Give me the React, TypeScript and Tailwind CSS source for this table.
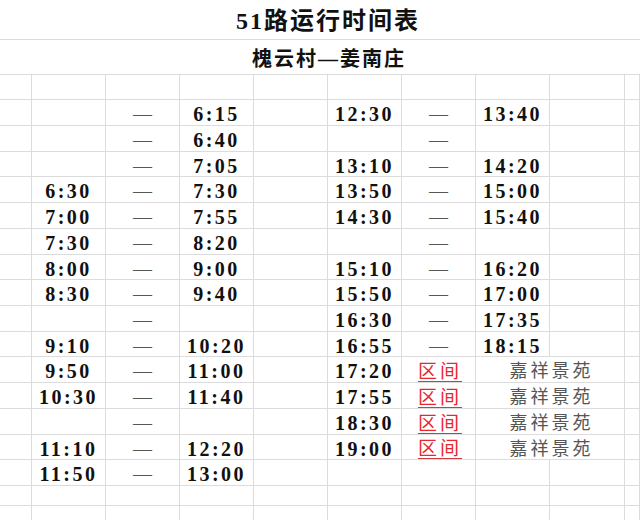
import React from 'react';

type Row = {
  a: string;
  b: string;
  c: string;
  d: string;
  kind: 'dash' | 'seg' | '';
  f: string;
};

const rows: Row[] = [
  { a: '', b: '—', c: '6:15', d: '12:30', kind: 'dash', f: '13:40' },
  { a: '', b: '—', c: '6:40', d: '', kind: 'dash', f: '' },
  { a: '', b: '—', c: '7:05', d: '13:10', kind: 'dash', f: '14:20' },
  { a: '6:30', b: '—', c: '7:30', d: '13:50', kind: 'dash', f: '15:00' },
  { a: '7:00', b: '—', c: '7:55', d: '14:30', kind: 'dash', f: '15:40' },
  { a: '7:30', b: '—', c: '8:20', d: '', kind: 'dash', f: '' },
  { a: '8:00', b: '—', c: '9:00', d: '15:10', kind: 'dash', f: '16:20' },
  { a: '8:30', b: '—', c: '9:40', d: '15:50', kind: 'dash', f: '17:00' },
  { a: '', b: '—', c: '', d: '16:30', kind: 'dash', f: '17:35' },
  { a: '9:10', b: '—', c: '10:20', d: '16:55', kind: 'dash', f: '18:15' },
  { a: '9:50', b: '—', c: '11:00', d: '17:20', kind: 'seg', f: '嘉祥景苑' },
  { a: '10:30', b: '—', c: '11:40', d: '17:55', kind: 'seg', f: '嘉祥景苑' },
  { a: '', b: '—', c: '', d: '18:30', kind: 'seg', f: '嘉祥景苑' },
  { a: '11:10', b: '—', c: '12:20', d: '19:00', kind: 'seg', f: '嘉祥景苑' },
  { a: '11:50', b: '—', c: '13:00', d: '', kind: '', f: '' },
];

// row heights so the lines land on the sheet's pixel rows
const heights = [
  'h-[26px]', 'h-[26px]', 'h-[25px]', 'h-[26px]', 'h-[26px]',
  'h-[26px]', 'h-[25px]', 'h-[26px]', 'h-[26px]', 'h-[25px]',
  'h-[26px]', 'h-[26px]', 'h-[26px]', 'h-[25px]', 'h-[26px]',
];

const grid = 'grid grid-cols-[32px_74px_74px_74px_74px_74px_74px_74px_75px_1fr]';
const cell = 'border-r border-b border-[#dcdcdc] flex items-center justify-center';

const Time = ({ t }: { t: string }) => (
  <span className="pt-[3px] text-[20px] font-bold tracking-[2.5px] text-[#111] leading-none">{t}</span>
);

const Dash = () => (
  <span className="pt-[2px] text-[19px] text-[#555] leading-none">—</span>
);

const Blank = ({ h }: { h: string }) => (
  <div className={`${grid} ${h}`}>
    {Array.from({ length: 10 }).map((_, i) => (
      <div key={i} className={cell} />
    ))}
  </div>
);

export default function App() {
  return (
    <div className="w-[640px] h-[520px] overflow-hidden bg-white font-['Liberation_Serif','Noto_Sans_CJK_SC',serif]">
      <div className="h-[40px] pl-[16px] border-b border-[#dcdcdc] flex items-center justify-center">
        <span className="pt-[3px] text-[24px] font-bold tracking-[2px] text-[#111] leading-none">51路运行时间表</span>
      </div>
      <div className="h-[35px] pl-[18px] border-b border-[#dcdcdc] flex items-center justify-center">
        <span className="pt-[3px] text-[20px] font-bold tracking-[2px] text-[#111] leading-none">槐云村—姜南庄</span>
      </div>
      <Blank h="h-[25px]" />
      {rows.map((r, i) => (
        <div key={i} className={`${grid} ${heights[i]}`}>
          <div className={cell} />
          <div className={cell}>{r.a && <Time t={r.a} />}</div>
          <div className={cell}>{r.b && <Dash />}</div>
          <div className={cell}>{r.c && <Time t={r.c} />}</div>
          <div className={cell} />
          <div className={cell}>{r.d && <Time t={r.d} />}</div>
          <div className={cell}>
            {r.kind === 'dash' && <Dash />}
            {r.kind === 'seg' && (
              <span className="pt-[3px] pl-[3px] text-[19px] tracking-[3px] text-[#e8262b] underline underline-offset-[3px] decoration-[#d23a3f] leading-none">
                区间
              </span>
            )}
          </div>
          {r.kind === 'seg' ? (
            <div className={`${cell} col-span-2`}>
              <span className="pt-[3px] pl-[3px] text-[18px] tracking-[3px] text-[#555] leading-none">{r.f}</span>
            </div>
          ) : (
            <>
              <div className={cell}>{r.f && <Time t={r.f} />}</div>
              <div className={cell} />
            </>
          )}
          <div className={cell} />
        </div>
      ))}
      <Blank h="h-[20px]" />
      <Blank h="h-[30px]" />
    </div>
  );
}
